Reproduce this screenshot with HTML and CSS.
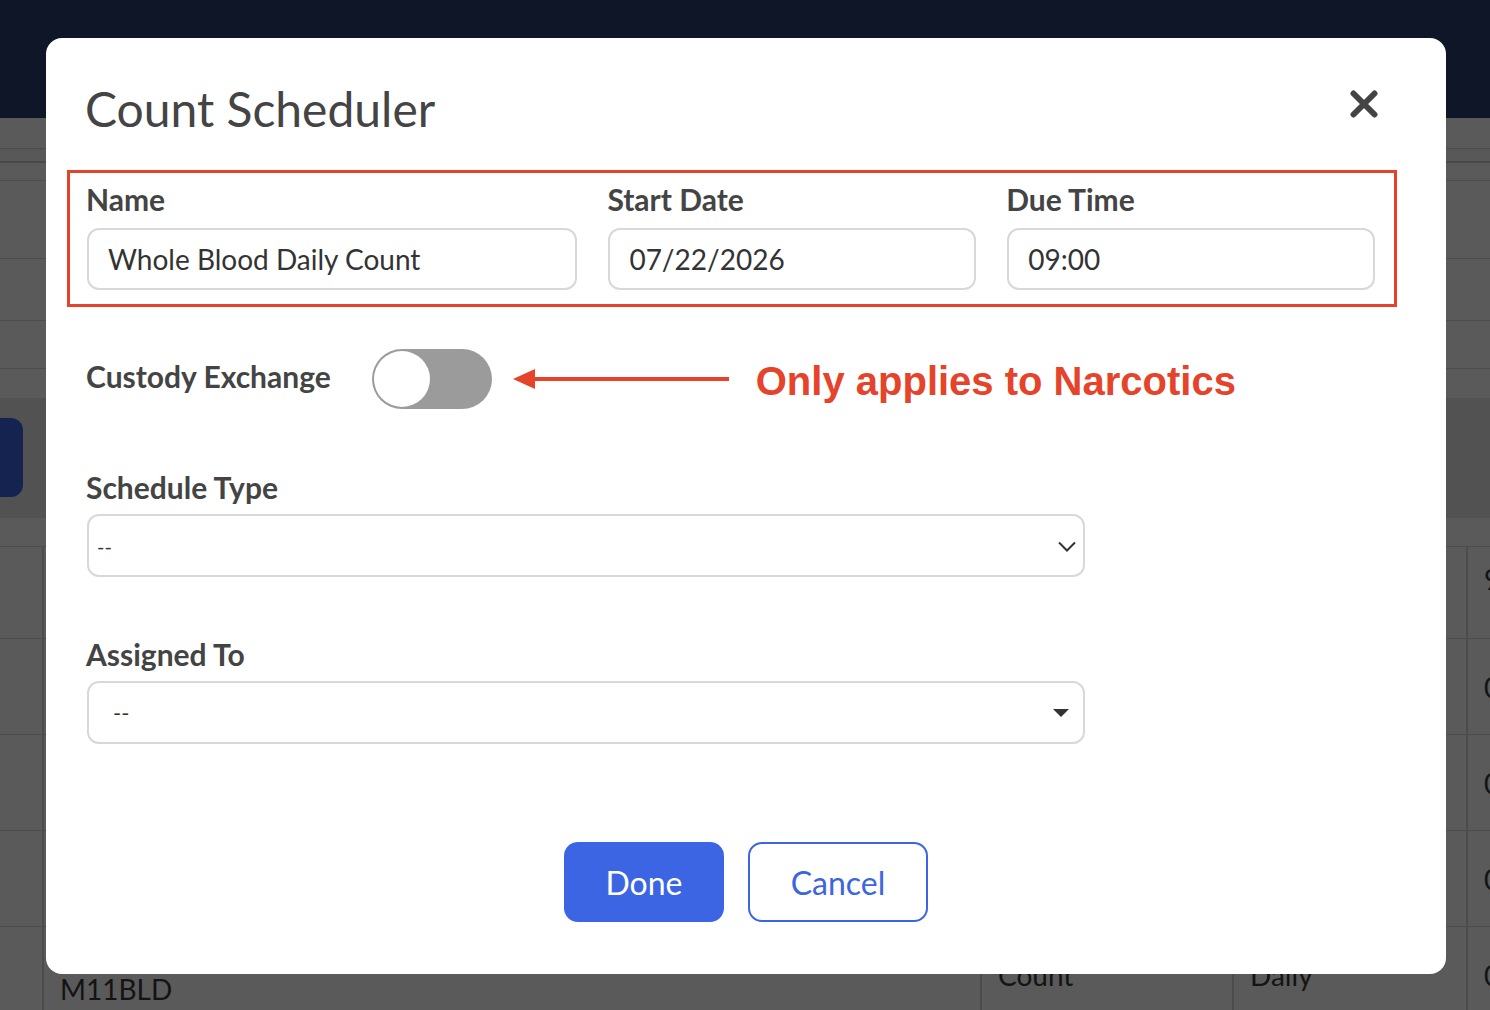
FILE: index.html
```html
<!DOCTYPE html>
<html lang="en">
<head>
    <meta charset="UTF-8">
    <meta name="viewport" content="width=device-width, initial-scale=1.0">
    <title>Count Scheduler</title>
    <link rel="stylesheet" href="styles.css">
</head>
<body>
    <!-- page behind the dialog -->
    <div class="page">
        <header class="topbar"></header>
        <div class="tabs"></div>
        <div class="strip"></div>
        <div class="filter-row r1"></div>
        <div class="filter-row r2"></div>
        <div class="filter-row r3"></div>
        <div class="filter-row r4"></div>
        <div class="spacer"></div>
        <div class="action-band">
            <button class="page-btn"></button>
        </div>
        <div class="table-head"></div>
        <div class="table">
            <div class="row first">
                <div class="cell"></div><div class="cell line"></div><div class="cell line"></div><div class="cell line"></div>
                <div class="cell line num">9</div>
            </div>
            <div class="row">
                <div class="cell"></div><div class="cell line"></div><div class="cell line"></div><div class="cell line"></div>
                <div class="cell line num">0</div>
            </div>
            <div class="row">
                <div class="cell"></div><div class="cell line"></div><div class="cell line"></div><div class="cell line"></div>
                <div class="cell line num">0</div>
            </div>
            <div class="row">
                <div class="cell"></div><div class="cell line"></div><div class="cell line"></div><div class="cell line"></div>
                <div class="cell line num">0</div>
            </div>
            <div class="row">
                <div class="cell"></div>
                <div class="cell line code">M11BLD</div>
                <div class="cell line">Count</div>
                <div class="cell line">Daily</div>
                <div class="cell line num">0</div>
            </div>
        </div>
    </div>

    <div class="overlay"></div>

    <div class="modal">
        <div class="modal-head">
            <h2 class="modal-title">Count Scheduler</h2>
            <svg class="close" width="28" height="28" viewBox="0 0 28 28">
                <path d="M3.5 3.5 L24.5 24.5 M24.5 3.5 L3.5 24.5" stroke="#444" stroke-width="6" stroke-linecap="round"/>
            </svg>
        </div>

        <div class="field-group">
            <div class="field">
                <label class="field-label">Name</label>
                <div class="input">Whole Blood Daily Count</div>
            </div>
            <div class="field">
                <label class="field-label">Start Date</label>
                <div class="input">07/22/2026</div>
            </div>
            <div class="field">
                <label class="field-label">Due Time</label>
                <div class="input">09:00</div>
            </div>
        </div>

        <div class="custody-row">
            <span class="field-label">Custody Exchange</span>
            <div class="toggle"><div class="knob"></div></div>
            <svg class="note-arrow" width="216" height="24" viewBox="0 0 216 24">
                <polygon points="0,12 22,2 22,22" fill="#e5432a"/>
                <rect x="18" y="10" width="198" height="4" fill="#e5432a"/>
            </svg>
            <span class="note">Only applies to Narcotics</span>
        </div>

        <label class="field-label block">Schedule Type</label>
        <div class="select native">
            <span>--</span>
            <svg width="18" height="11" viewBox="0 0 18 11">
                <polyline points="1,1.5 9,9.5 17,1.5" fill="none" stroke="#333" stroke-width="2"/>
            </svg>
        </div>

        <label class="field-label block second">Assigned To</label>
        <div class="select custom">
            <span>--</span>
            <svg width="16" height="8" viewBox="0 0 16 8">
                <polygon points="0,0 16,0 8,8" fill="#333"/>
            </svg>
        </div>

        <div class="modal-actions">
            <button class="btn primary">Done</button>
            <button class="btn outline">Cancel</button>
        </div>
    </div>
</body>
</html>
```

FILE: styles.css
```css
* {
    box-sizing: border-box;
}
html, body {
    margin: 0;
    height: 100%;
}
body {
    font-family: Lato, "Noto Sans", sans-serif;
    background: #fff;
    color: #333;
    overflow: hidden;
}

/* page */
.topbar {
    height: 118px;
    background: #2b3f72;
}
.tabs {
    height: 31px;
    border-bottom: 1px solid #d6d6d6;
}
.strip {
    height: 14px;
    background: #fafafa;
    border-bottom: 2px solid #cfcfcf;
}
.filter-row {
    border-bottom: 1px solid #dadada;
}
.r1 { height: 18px; }
.r2 { height: 78px; }
.r3 { height: 62px; }
.r4 { height: 48px; }
.spacer {
    height: 29px;
}
.action-band {
    height: 120px;
    background: #e8e8e8;
    padding-top: 20px;
}
.page-btn {
    display: block;
    margin-left: -117px;
    width: 140px;
    height: 79px;
    border: none;
    border-radius: 12px;
    background: #3b65e3;
}
.table-head {
    height: 29px;
    border-bottom: 1px solid #dadada;
}
.row {
    display: grid;
    grid-template-columns: 42px 938px 252px 234px 1fr;
    height: 96px;
    border-bottom: 1px solid #dadada;
}
.row.first {
    height: 92px;
}
.cell {
    display: flex;
    align-items: center;
    padding-left: 16px;
    font-size: 28px;
    color: #3a3a3a;
    white-space: nowrap;
}
.cell.line {
    border-left: 2px solid #d8d8d8;
}
.cell.code {
    padding-top: 28px;
}
.row.first .num {
    padding-bottom: 28px;
}

.overlay {
    position: fixed;
    inset: 0;
    background: rgba(0, 0, 0, 0.647);
}

/* dialog */
.modal {
    position: absolute;
    left: 46px;
    top: 38px;
    width: 1400px;
    height: 936px;
    background: #fff;
    border-radius: 16px;
    padding: 39px 71px 0 41px;
}
.modal-head {
    display: flex;
    justify-content: space-between;
    align-items: flex-start;
}
.modal-title {
    margin: 3px 0 0 -2px;
    font-size: 48px;
    line-height: 58px;
    font-weight: 400;
    color: #444;
}
.close {
    margin-top: 13px;
    margin-right: -3px;
}
.field-group {
    margin: 32px -22px 0 -20px;
    border: 3px solid #e5432a;
    padding: 8px 19px 14px 17px;
    display: grid;
    grid-template-columns: 4fr 3fr 3fr;
    column-gap: 31px;
}
.field-label {
    font-size: 30px;
    line-height: 36px;
    font-weight: 700;
    color: #444;
}
.field .field-label {
    display: block;
    margin: 0 0 11px -1px;
}
.input {
    height: 62px;
    border: 2px solid #d8d8d8;
    border-radius: 12px;
    padding: 0 20px 0 19px;
    display: flex;
    align-items: center;
    font-size: 28px;
    color: #333;
}
.custody-row {
    margin-top: 42px;
    height: 60px;
    display: flex;
    align-items: center;
}
.custody-row .field-label {
    margin: 0 0 6px -1px;
}
.toggle {
    margin-left: 41px;
    width: 120px;
    height: 60px;
    border-radius: 30px;
    background: #9b9b9b;
    padding: 2px;
}
.knob {
    width: 56px;
    height: 56px;
    border-radius: 50%;
    background: #fff;
}
.note-arrow {
    margin-left: 21px;
}
.note {
    margin-left: 27px;
    padding-top: 4px;
    font-family: "Liberation Sans", Arial, sans-serif;
    font-weight: 700;
    font-size: 40px;
    line-height: 40px;
    color: #e5432a;
}
.field-label.block {
    display: block;
    margin: 60px 0 9px -1px;
}
.field-label.second {
    margin-top: 59px;
}
.select {
    width: 998px;
    height: 63px;
    border: 2px solid #d8d8d8;
    border-radius: 12px;
    display: flex;
    align-items: center;
    justify-content: space-between;
    color: #333;
}
.select.native {
    padding: 0 7px 0 8px;
    font-size: 20px;
}
.select.custom {
    padding: 0 14px 0 24px;
    font-size: 22px;
}
.select.native svg {
    margin-top: 1px;
}
.modal-actions {
    margin: 98px -71px 0 -41px;
    display: flex;
    justify-content: center;
    gap: 24px;
}
.btn {
    height: 80px;
    border-radius: 14px;
    font-family: Lato, "Noto Sans", sans-serif;
    font-size: 32px;
    cursor: pointer;
}
.btn.primary {
    width: 160px;
    border: none;
    background: #3b65e3;
    color: #fff;
}
.btn.outline {
    width: 180px;
    border: 2px solid #3b65e3;
    background: #fff;
    color: #3b65e3;
}
```
